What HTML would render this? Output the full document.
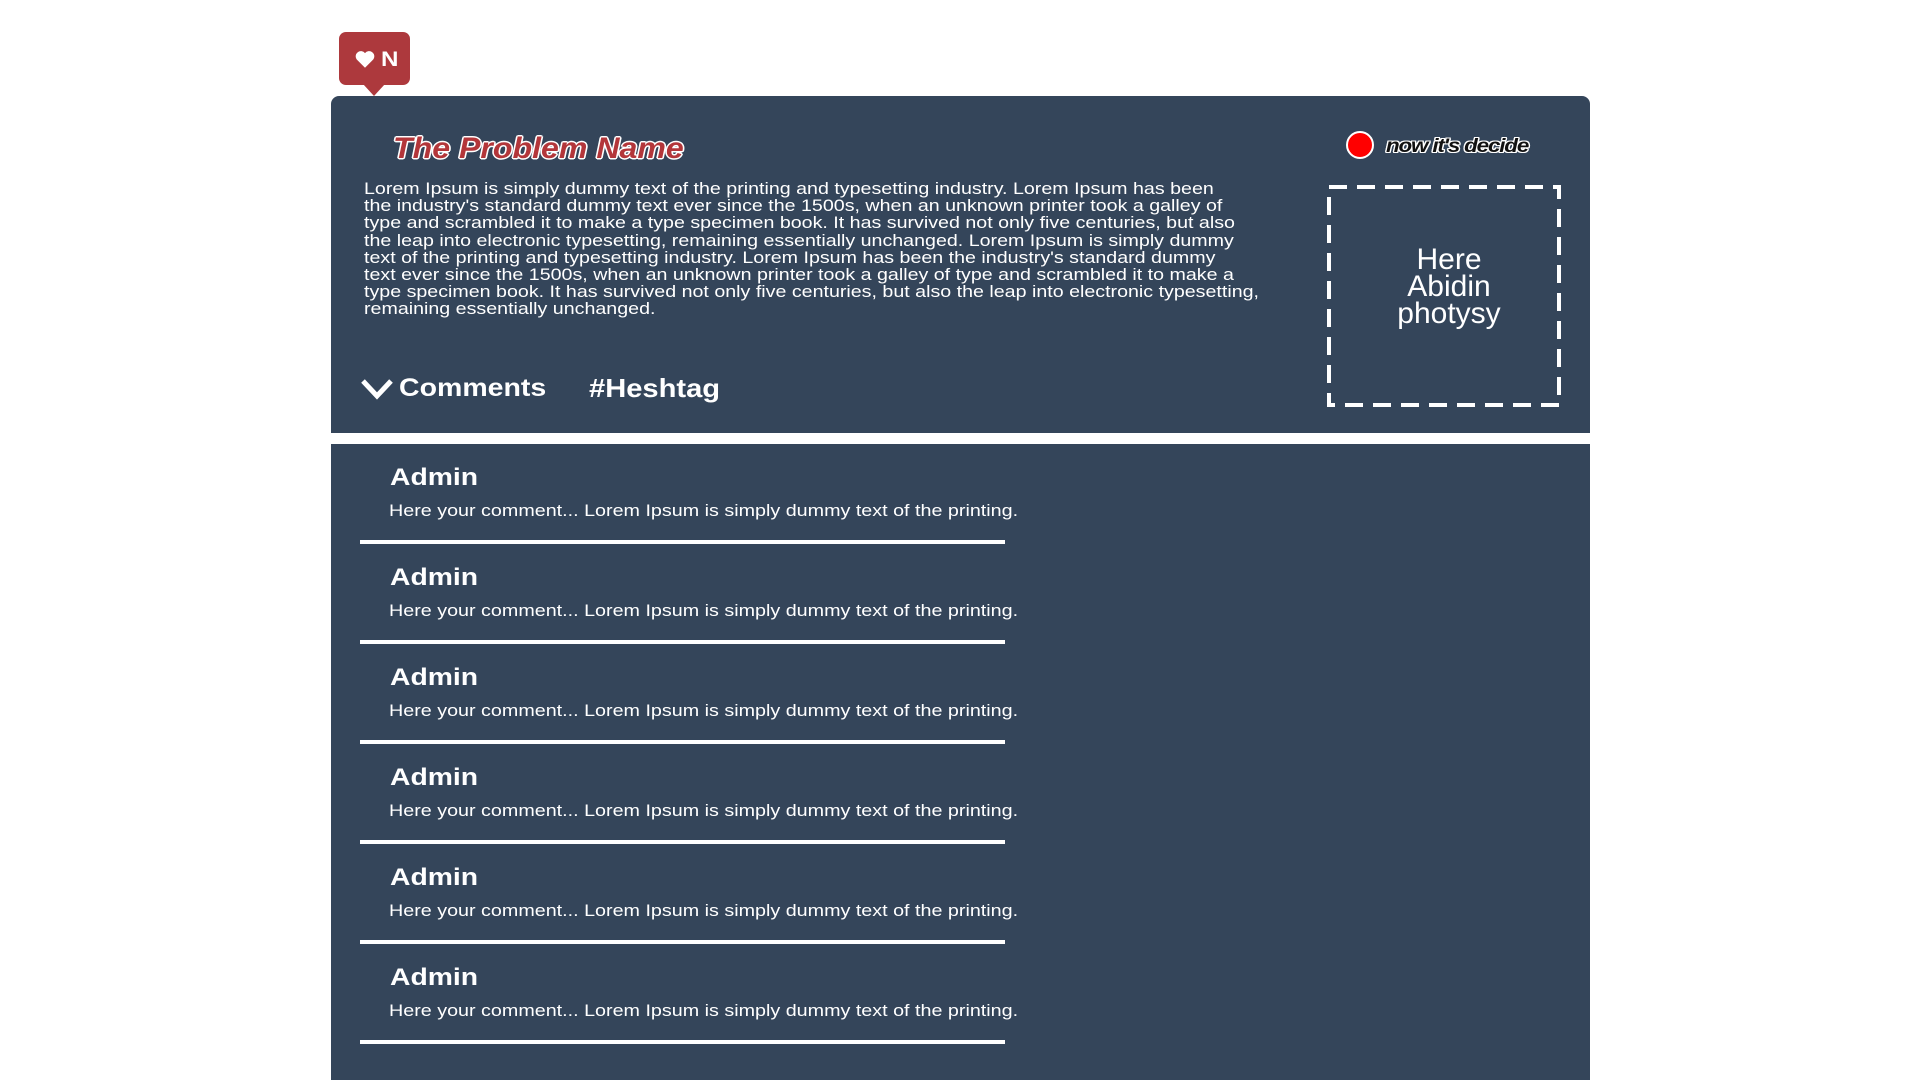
<!DOCTYPE html>
<html><head><meta charset="utf-8"><style>
*{margin:0;padding:0;box-sizing:border-box}
body{width:1920px;height:1080px;background:#fff;position:relative;overflow:hidden;font-family:"Liberation Sans",sans-serif;color:#fff}
.p{position:absolute;background:#34455a}
.a{position:absolute;white-space:nowrap;transform-origin:0 0}
.para{left:364px;top:181px;font-size:16.5px;line-height:17.2px;transform:scaleX(1.19)}
.title{left:393px;top:132px;font-size:30px;font-weight:bold;font-style:italic;color:#b3363a;transform:scaleX(1.07);
text-shadow:1.5px 0 #fff,-1.5px 0 #fff,0 1.5px #fff,0 -1.5px #fff,1px 1px #fff,-1px -1px #fff,1px -1px #fff,-1px 1px #fff}
.dec{left:1386px;top:136px;font-size:19px;font-weight:bold;font-style:italic;color:#111;letter-spacing:-1px;transform:scaleX(1.18);
text-shadow:1.2px 0 #fff,-1.2px 0 #fff,0 1.2px #fff,0 -1.2px #fff,1px 1px #fff,-1px -1px #fff,1px -1px #fff,-1px 1px #fff}
.name{font-size:24px;font-weight:bold;left:390px;transform:scaleX(1.18)}
.cm{font-size:17px;left:389px;transform:scaleX(1.16)}
.div{position:absolute;left:360px;width:645px;height:4px;background:#fff}
</style></head><body>
<div style="position:absolute;left:339px;top:32px;width:71px;height:53px;background:#ad393d;border-radius:7px"></div>
<div style="position:absolute;left:363px;top:84px;width:0;height:0;border-left:11px solid transparent;border-right:11px solid transparent;border-top:12px solid #ad393d"></div>
<svg style="position:absolute;left:354px;top:50px" width="22" height="19" viewBox="0 0 16 15"><path d="M8 14 L1.5 7.5 A3.8 3.8 0 0 1 8 2.5 A3.8 3.8 0 0 1 14.5 7.5 Z" fill="#fff"/></svg>
<div class="a" style="left:381px;top:48px;font-size:21px;font-weight:bold;transform:scaleX(1.15)">N</div>

<div class="p" style="left:331px;top:96px;width:1259px;height:337px;border-radius:8px 8px 0 0"></div>
<div class="a title">The Problem Name</div>
<div style="position:absolute;left:1346px;top:131px;width:28px;height:28px;border-radius:50%;background:#f00;border:2px solid #fff"></div>
<div class="a dec">now it's decide</div>
<svg style="position:absolute;left:1327px;top:185px" width="234" height="222"><rect x="2" y="2" width="230" height="218" fill="none" stroke="#fff" stroke-width="4" stroke-dasharray="18 10"/></svg>
<div class="a" style="left:1333px;width:232px;top:246px;text-align:center;font-size:30px;line-height:27px;white-space:normal">Here<br>Abidin<br>photysy</div>
<div class="a para">Lorem Ipsum is simply dummy text of the printing and typesetting industry. Lorem Ipsum has been<br>the industry's standard dummy text ever since the 1500s, when an unknown printer took a galley of<br>type and scrambled it to make a type specimen book. It has survived not only five centuries, but also<br>the leap into electronic typesetting, remaining essentially unchanged. Lorem Ipsum is simply dummy<br>text of the printing and typesetting industry. Lorem Ipsum has been the industry's standard dummy<br>text ever since the 1500s, when an unknown printer took a galley of type and scrambled it to make a<br>type specimen book. It has survived not only five centuries, but also the leap into electronic typesetting,<br>remaining essentially unchanged.</div>
<svg style="position:absolute;left:360px;top:378px" width="34" height="22"><path d="M3 3 L17 18 L31 3" fill="none" stroke="#fff" stroke-width="5"/></svg>
<div class="a" style="left:399px;top:374px;font-size:25px;font-weight:bold;transform:scaleX(1.14)">Comments</div>
<div class="a" style="left:589px;top:373px;font-size:26px;font-weight:bold;transform:scaleX(1.12)">#Heshtag</div>

<div class="p" style="left:331px;top:444px;width:1259px;height:636px"></div>
<div class="a name" style="top:464px">Admin</div><div class="a cm" style="top:501px">Here your comment... Lorem Ipsum is simply dummy text of the printing.</div><div class="div" style="top:540px"></div>
<div class="a name" style="top:564px">Admin</div><div class="a cm" style="top:601px">Here your comment... Lorem Ipsum is simply dummy text of the printing.</div><div class="div" style="top:640px"></div>
<div class="a name" style="top:664px">Admin</div><div class="a cm" style="top:701px">Here your comment... Lorem Ipsum is simply dummy text of the printing.</div><div class="div" style="top:740px"></div>
<div class="a name" style="top:764px">Admin</div><div class="a cm" style="top:801px">Here your comment... Lorem Ipsum is simply dummy text of the printing.</div><div class="div" style="top:840px"></div>
<div class="a name" style="top:864px">Admin</div><div class="a cm" style="top:901px">Here your comment... Lorem Ipsum is simply dummy text of the printing.</div><div class="div" style="top:940px"></div>
<div class="a name" style="top:964px">Admin</div><div class="a cm" style="top:1001px">Here your comment... Lorem Ipsum is simply dummy text of the printing.</div><div class="div" style="top:1040px"></div>
</body></html>
